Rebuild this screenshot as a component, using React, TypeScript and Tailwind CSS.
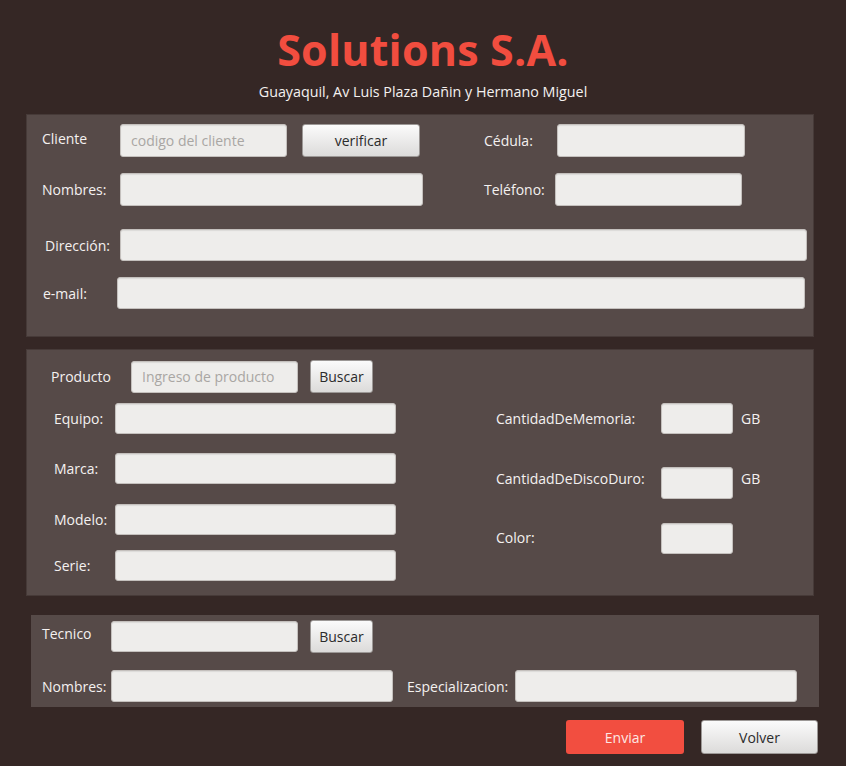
import React from "react";

const Field = ({ w, h = 32, placeholder }: { w: number; h?: number; placeholder?: string }) => (
  <div
    className="flex items-center rounded-[3px] border border-[#c4c0bd] bg-[#eeedeb] px-[10px] text-[14px] text-[#a9a6a3] shadow-[inset_0_1px_1px_rgba(0,0,0,0.08)]"
    style={{ width: w, height: h }}
  >
    {placeholder}
  </div>
);

const Btn = ({ w, label }: { w: number; label: string }) => (
  <div
    className="flex h-[33px] items-center justify-center rounded-[3px] border border-[#9c9896] bg-gradient-to-b from-[#fbfbfb] to-[#dcdbda] text-[14px] text-[#2b2b2b]"
    style={{ width: w }}
  >
    {label}
  </div>
);

const Label = ({ w, text }: { w: number; text: string }) => (
  <div className="shrink-0 text-[14px] text-[#f4f1f0]" style={{ width: w }}>
    {text}
  </div>
);

export default function App() {
  return (
    <div className="flex h-[766px] w-[846px] flex-col bg-[#352725] font-['Open_Sans',sans-serif]">
      <div className="flex flex-col items-center pt-[25px]">
        <div className="text-[43px] font-bold leading-[50px] tracking-[0.2px] text-[#f14d3f]">Solutions S.A.</div>
        <div className="mt-[6px] text-[14.3px] text-[#f4f1f0]">Guayaquil, Av Luis Plaza Dañin y Hermano Miguel</div>
      </div>

      {/* cliente */}
      <div className="ml-[26px] mt-[12px] h-[223px] w-[788px] border border-[#463a38] bg-[#564a48] pt-[9px]">
        <div className="flex items-center pl-[15px]">
          <div className="pb-[4px]">
            <Label w={78} text="Cliente" />
          </div>
          <Field w={167} h={33} placeholder="codigo del cliente" />
          <div className="ml-[15px]">
            <Btn w={118} label="verificar" />
          </div>
          <div className="ml-[64px]">
            <Label w={73} text="Cédula:" />
          </div>
          <Field w={188} h={33} />
        </div>
        <div className="mt-[16px] flex items-center pl-[15px]">
          <Label w={78} text="Nombres:" />
          <Field w={303} h={33} />
          <div className="ml-[61px]">
            <Label w={71} text="Teléfono:" />
          </div>
          <Field w={187} h={33} />
        </div>
        <div className="mt-[23px] flex items-center pl-[18px]">
          <Label w={75} text="Dirección:" />
          <Field w={687} />
        </div>
        <div className="mt-[16px] flex items-center pl-[16px]">
          <Label w={74} text="e-mail:" />
          <Field w={688} />
        </div>
      </div>

      {/* producto */}
      <div className="ml-[26px] mt-[12px] h-[247px] w-[788px] border border-[#463a38] bg-[#564a48] pt-[10px]">
        <div className="flex items-center pl-[24px]">
          <Label w={80} text="Producto" />
          <Field w={167} placeholder="Ingreso de producto" />
          <div className="ml-[12px]">
            <Btn w={63} label="Buscar" />
          </div>
        </div>
        <div className="mt-[10px] flex">
          <div className="flex w-[442px] flex-col gap-[19px] pl-[27px]">
            {["Equipo:", "Marca:", "Modelo:", "Serie:"].map((t, i) => (
              <div key={t} className={`flex items-center ${i === 2 ? "mt-[1px]" : ""} ${i === 3 ? "-mt-[4px]" : ""}`}>
                <Label w={61} text={t} />
                <Field w={281} h={31} />
              </div>
            ))}
          </div>
          <div className="flex flex-col pl-[27px]">
            <div className="flex items-center">
              <Label w={165} text="CantidadDeMemoria:" />
              <Field w={72} h={31} />
              <div className="ml-[8px] text-[14px] text-[#f4f1f0]">GB</div>
            </div>
            <div className="mt-[33px] flex items-center">
              <div className="pb-[10px]">
                <Label w={165} text="CantidadDeDiscoDuro:" />
              </div>
              <Field w={72} h={32} />
              <div className="ml-[8px] pb-[10px] text-[14px] text-[#f4f1f0]">GB</div>
            </div>
            <div className="mt-[24px] flex items-center">
              <div className="pb-[2px]">
                <Label w={165} text="Color:" />
              </div>
              <Field w={72} h={31} />
            </div>
          </div>
        </div>
      </div>

      {/* tecnico */}
      <div className="ml-[31px] mt-[19px] h-[92px] w-[788px] bg-[#564a48] pt-[5px]">
        <div className="flex items-start pl-[11px]">
          <div className="pt-[3px]">
            <Label w={69} text="Tecnico" />
          </div>
          <div className="mt-[1px]">
            <Field w={187} h={31} />
          </div>
          <div className="ml-[12px]">
            <Btn w={63} label="Buscar" />
          </div>
        </div>
        <div className="mt-[17px] flex items-center pl-[11px]">
          <Label w={69} text="Nombres:" />
          <Field w={282} />
          <div className="ml-[14px]">
            <Label w={108} text="Especializacion:" />
          </div>
          <Field w={282} />
        </div>
      </div>

      <div className="mr-[28px] mt-[13px] flex justify-end gap-[17px]">
        <div className="flex h-[34px] w-[118px] items-center justify-center rounded-[3px] bg-[#f24e40] text-[14px] text-[#fde8e4]">
          Enviar
        </div>
        <div className="flex h-[34px] w-[117px] items-center justify-center rounded-[3px] border border-[#9c9896] bg-gradient-to-b from-[#fbfbfb] to-[#dcdbda] text-[14px] text-[#2b2b2b]">
          Volver
        </div>
      </div>
    </div>
  );
}
